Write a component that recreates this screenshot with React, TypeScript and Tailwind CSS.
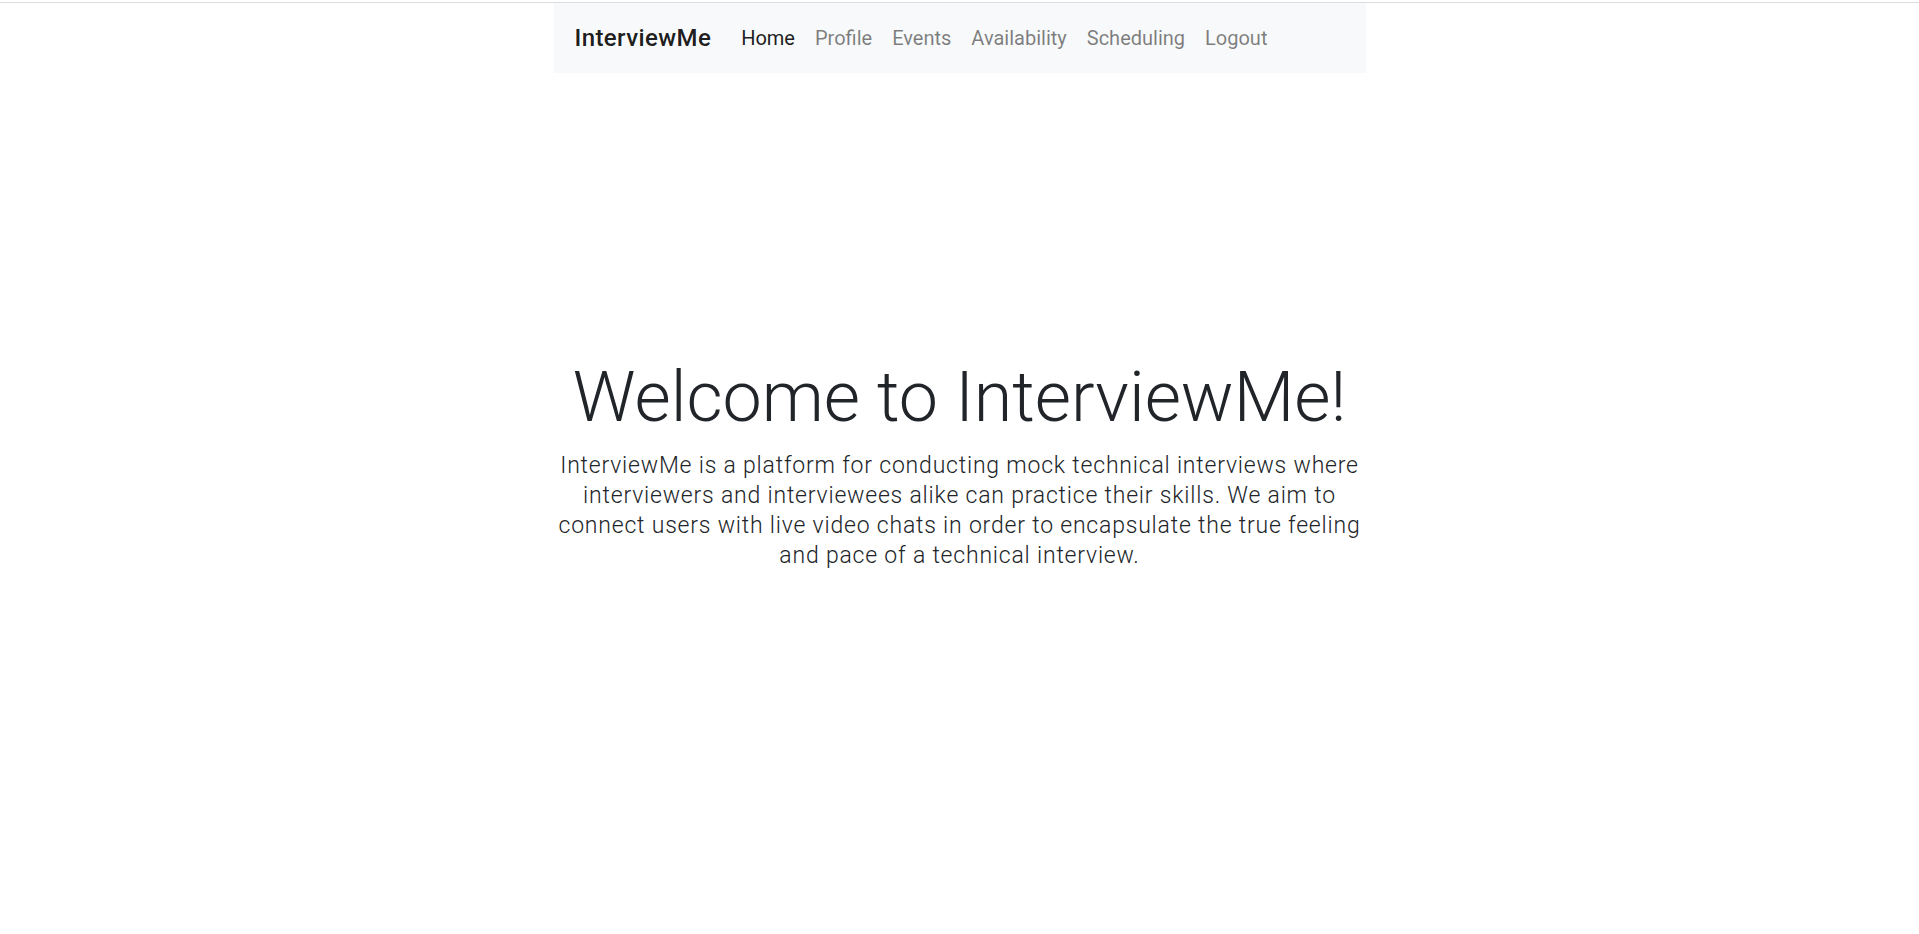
import React from "react";

const links = ["Home", "Profile", "Events", "Availability", "Scheduling", "Logout"];

export default function App() {
  return (
    <div className="min-h-screen bg-white" style={{ fontFamily: "Roboto, 'Liberation Sans', sans-serif" }}>
      <div className="h-[2px] bg-white" />
      <div className="h-px bg-[#dddddd]" />
      <nav className="mx-auto flex h-[70px] w-[812px] items-center bg-[#f8f9fa] pl-[21px]">
        <span className="mr-[20px] text-[24px] font-medium tracking-[0.4px] text-black/90">InterviewMe</span>
        <ul className="flex items-center">
          {links.map((l, i) => (
            <li key={l}>
              <a
                href="#"
                className={
                  "block px-[10px] text-[20px] font-normal " +
                  (i === 0 ? "text-black/90" : "text-black/50")
                }
              >
                {l}
              </a>
            </li>
          ))}
        </ul>
      </nav>
      <main className="mx-auto w-[812px] pt-[282px] text-center text-[#212529]">
        <h1 className="mb-[12px] text-[70px] font-light leading-[1.2]">Welcome to InterviewMe!</h1>
        <p className="text-[23px] font-light leading-[30px] tracking-[0.8px]">
          InterviewMe is a platform for conducting mock technical interviews where interviewers and
          interviewees alike can practice their skills. We aim to connect users with live video chats
          in order to encapsulate the true feeling and pace of a technical interview.
        </p>
      </main>
    </div>
  );
}
